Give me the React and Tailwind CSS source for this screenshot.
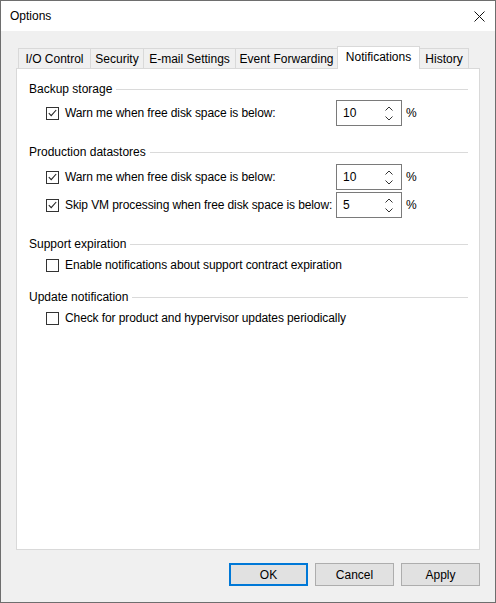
import React, { useState } from 'react';

const tabs = [
  { label: 'I/O Control', w: 'w-[72px]' },
  { label: 'Security', w: 'w-[53px]' },
  { label: 'E-mail Settings', w: 'w-[92px]' },
  { label: 'Event Forwarding', w: 'w-[102px]' },
  { label: 'Notifications', w: 'w-[83px]' },
  { label: 'History', w: 'w-[49px]' },
];

const CheckBox = ({ checked, onChange }) => (
  <button
    onClick={onChange}
    className="w-[13px] h-[13px] shrink-0 border border-[#333333] bg-white flex items-center justify-center"
  >
    {checked && (
      <svg width="9" height="8" viewBox="0 0 9 8" fill="none">
        <path d="M0.8 4.2 L3.2 6.6 L8.2 1" stroke="#222" strokeWidth="1.1" />
      </svg>
    )}
  </button>
);

const Spin = ({ value }) => (
  <div className="w-[66px] h-[26px] border border-[#7a7a7a] bg-white flex items-center pl-[6px] pr-[8px]">
    <span className="flex-1">{value}</span>
    <div className="flex flex-col items-center gap-[5px]">
      <svg width="8" height="5" viewBox="0 0 8 5" fill="none">
        <path d="M0.5 4.5 L4 1 L7.5 4.5" stroke="#333" strokeWidth="1" />
      </svg>
      <svg width="8" height="5" viewBox="0 0 8 5" fill="none">
        <path d="M0.5 0.5 L4 4 L7.5 0.5" stroke="#333" strokeWidth="1" />
      </svg>
    </div>
  </div>
);

const Header = ({ title, className = '' }) => (
  <div className={`h-[16px] flex items-center gap-[4px] ${className}`}>
    <span className="whitespace-nowrap">{title}</span>
    <div className="flex-1 h-px bg-[#dadada]" />
  </div>
);

const CheckRow = ({ label, checked, onToggle, spin, className = '' }) => (
  <div className={`flex items-center pl-[17px] ${spin ? 'h-[26px]' : 'h-[20px]'} ${className}`}>
    <div className={`flex items-center gap-[6px] whitespace-nowrap ${spin ? 'w-[290px]' : ''}`}>
      <CheckBox checked={checked} onChange={onToggle} />
      <span className="tracking-[-0.1px]">{label}</span>
    </div>
    {spin && (
      <>
        <Spin value={spin} />
        <span className="ml-[4px]">%</span>
      </>
    )}
  </div>
);

export default function App() {
  const [checks, setChecks] = useState({ a: true, b: true, c: true, d: false, e: false });
  const toggle = (k) => setChecks((c) => ({ ...c, [k]: !c[k] }));

  return (
    <div
      className="w-[496px] h-[603px] border border-[#6e6e6e] bg-[#f0f0f0] flex flex-col text-[12px] text-black"
      style={{ fontFamily: '"Liberation Sans", Arial, sans-serif' }}
    >
      {/* Title bar */}
      <div className="h-[30px] bg-white flex items-center justify-between pl-[9px] pr-[10px]">
        <span>Options</span>
        <svg width="11" height="11" viewBox="0 0 11 11" fill="none">
          <path d="M0.5 0.5 L10.5 10.5 M10.5 0.5 L0.5 10.5" stroke="#111" strokeWidth="1" />
        </svg>
      </div>

      <div className="flex-1 flex flex-col px-[15px] pt-[15px] pb-[16px]">
        {/* Tabs */}
        <div className="h-[22px] flex items-end pl-[2px]">
          {tabs.map((t, i) => {
            const selected = t.label === 'Notifications';
            if (selected) {
              return (
                <div
                  key={t.label}
                  className={`${t.w} h-[23px] -mb-px relative z-10 bg-white border-l border-t border-r border-[#d9d9d9] flex items-center justify-center pb-[2px]`}
                >
                  {t.label}
                </div>
              );
            }
            const last = i === tabs.length - 1;
            return (
              <div
                key={t.label}
                className={`${t.w} h-[20px] bg-[#f0f0f0] border-t border-[#d9d9d9] ${last ? 'border-r' : 'border-l'} flex items-center justify-center`}
              >
                {t.label}
              </div>
            );
          })}
        </div>

        {/* Panel */}
        <div className="h-[482px] bg-white border border-[#d9d9d9] pl-[12px] pr-[11px] pt-[12px] flex flex-col">
          <Header title="Backup storage" />
          <CheckRow
            className="mt-[3px]"
            label="Warn me when free disk space is below:"
            checked={checks.a}
            onToggle={() => toggle('a')}
            spin="10"
          />

          <Header title="Production datastores" className="mt-[18px]" />
          <CheckRow
            className="mt-[4px]"
            label="Warn me when free disk space is below:"
            checked={checks.b}
            onToggle={() => toggle('b')}
            spin="10"
          />
          <CheckRow
            className="mt-[2px]"
            label="Skip VM processing when free disk space is below:"
            checked={checks.c}
            onToggle={() => toggle('c')}
            spin="5"
          />

          <Header title="Support expiration" className="mt-[18px]" />
          <CheckRow
            className="mt-[3px]"
            label="Enable notifications about support contract expiration"
            checked={checks.d}
            onToggle={() => toggle('d')}
          />

          <Header title="Update notification" className="mt-[14px]" />
          <CheckRow
            className="mt-[3px]"
            label="Check for product and hypervisor updates periodically"
            checked={checks.e}
            onToggle={() => toggle('e')}
          />
        </div>

        {/* Buttons */}
        <div className="mt-[13px] flex justify-end gap-[7px]">
          <button className="w-[79px] h-[23px] bg-[#e1e1e1] border-2 border-[#0078d7]">OK</button>
          <button className="w-[79px] h-[23px] bg-[#e1e1e1] border border-[#adadad]">Cancel</button>
          <button className="w-[79px] h-[23px] bg-[#e1e1e1] border border-[#adadad]">Apply</button>
        </div>
      </div>
    </div>
  );
}
